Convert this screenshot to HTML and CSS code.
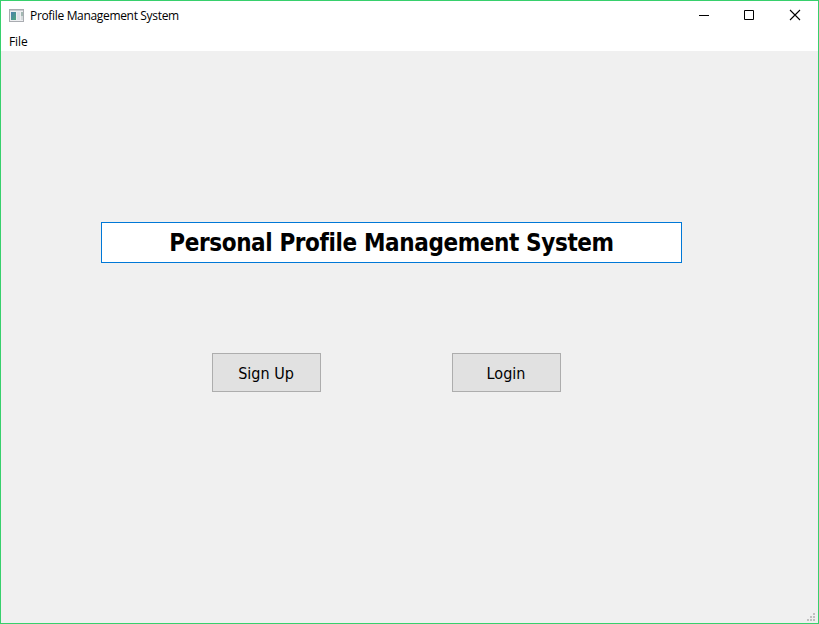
FILE: index.html
```html
<!DOCTYPE html>
<html lang="en">
<head>
<meta charset="utf-8">
<title>Profile Management System</title>
<link rel="stylesheet" href="styles.css">
</head>
<body>
<div class="window">
  <header class="titlebar">
    <svg class="app-icon" width="15" height="13" viewBox="0 0 15 13" shape-rendering="crispEdges">
      <defs><linearGradient id="pane" x1="0" y1="0" x2="1" y2="1"><stop offset="0" stop-color="#4b7fae"/><stop offset="1" stop-color="#4fa77c"/></linearGradient></defs>
      <rect x=".5" y=".5" width="14" height="12" fill="#eeeff1" stroke="#a9acb1"/>
      <rect x="1" y="1" width="13" height="1" fill="#c9ccd1"/>
      <rect x="2" y="3" width="5" height="8" fill="url(#pane)"/>
      <rect x="8" y="3" width="3" height="8" fill="#dfe2e8"/>
      <rect x="12" y="3" width="2" height="4" fill="#a3b8b2"/>
      <rect x="12" y="7" width="2" height="4" fill="#d5dbdc"/>
    </svg>
    <span class="title">Profile Management System</span>
    <div class="controls">
      <svg width="46" height="29" viewBox="0 0 46 29"><path d="M8 14.5h10" stroke="#000"/></svg>
      <svg width="46" height="29" viewBox="0 0 46 29"><path d="M7.500 9.500h9v9h-9z" fill="none" stroke="#000"/></svg>
      <svg width="28" height="29" viewBox="0 0 28 29"><path d="M7 9l10 10M17 9L7 19" stroke="#000" stroke-width="1.100"/></svg>
    </div>
  </header>
  <nav class="menubar"><span class="menu">File</span></nav>
  <main class="content">
    <h1 class="heading"><span>Personal Profile Management System</span></h1>
    <div class="actions">
      <button class="button signup">Sign Up</button>
      <button class="button login">Login</button>
    </div>
    <svg class="grip" width="8" height="8" viewBox="0 0 8 8" shape-rendering="crispEdges" fill="#bfbfbf"><path d="M6 0h2v2H6zM3 3h2v2H3zM6 3h2v2H6zM0 6h2v2H0zM3 6h2v2H3zM6 6h2v2H6z"/></svg>
  </main>
</div>
</body>
</html>
```
FILE: styles.css
```css
* { box-sizing: border-box; }
body { margin: 0; color: #000; }
.window {
  width: 819px;
  height: 624px;
  border: 1px solid #37d06c;
  background: #fff;
  display: flex;
  flex-direction: column;
}
.titlebar {
  height: 30px;
  padding: 0 7px 0 8px;
  display: flex;
  align-items: center;
  font: 12px/16px "Open Sans", sans-serif;
}
.app-icon { margin-right: 6px; margin-bottom: 2px; }
.title { letter-spacing: -0.33px; white-space: nowrap; }
.controls { margin-left: auto; display: flex; height: 29px; align-self: flex-start; }
.menubar {
  height: 20px;
  padding-left: 8px;
  font: 12px/21px "Open Sans", sans-serif;
  letter-spacing: -0.1px;
}
.content {
  flex: 1;
  background: #f0f0f0;
  display: flex;
  flex-direction: column;
  padding: 171px 3px 2px 100px;
}
.heading {
  margin: 0;
  width: 581px;
  height: 41px;
  border: 1px solid #0078d7;
  background: #fff;
  font: bold 24px/41px "DejaVu Sans Condensed", "DejaVu Sans", sans-serif;
  font-stretch: condensed;
  letter-spacing: -0.39px;
  text-align: center;
  white-space: nowrap;
}
.actions { display: flex; gap: 131px; margin: 90px 0 0 111px; }
.button {
  width: 109px;
  height: 39px;
  padding: 2px 1px 0 0;
  border: 1px solid #adadad;
  background: #e1e1e1;
  color: #000;
  font: 16px/35px "DejaVu Sans Condensed", "DejaVu Sans", sans-serif;
  font-stretch: condensed;
}
.grip { margin: auto 0 0 auto; }
```
